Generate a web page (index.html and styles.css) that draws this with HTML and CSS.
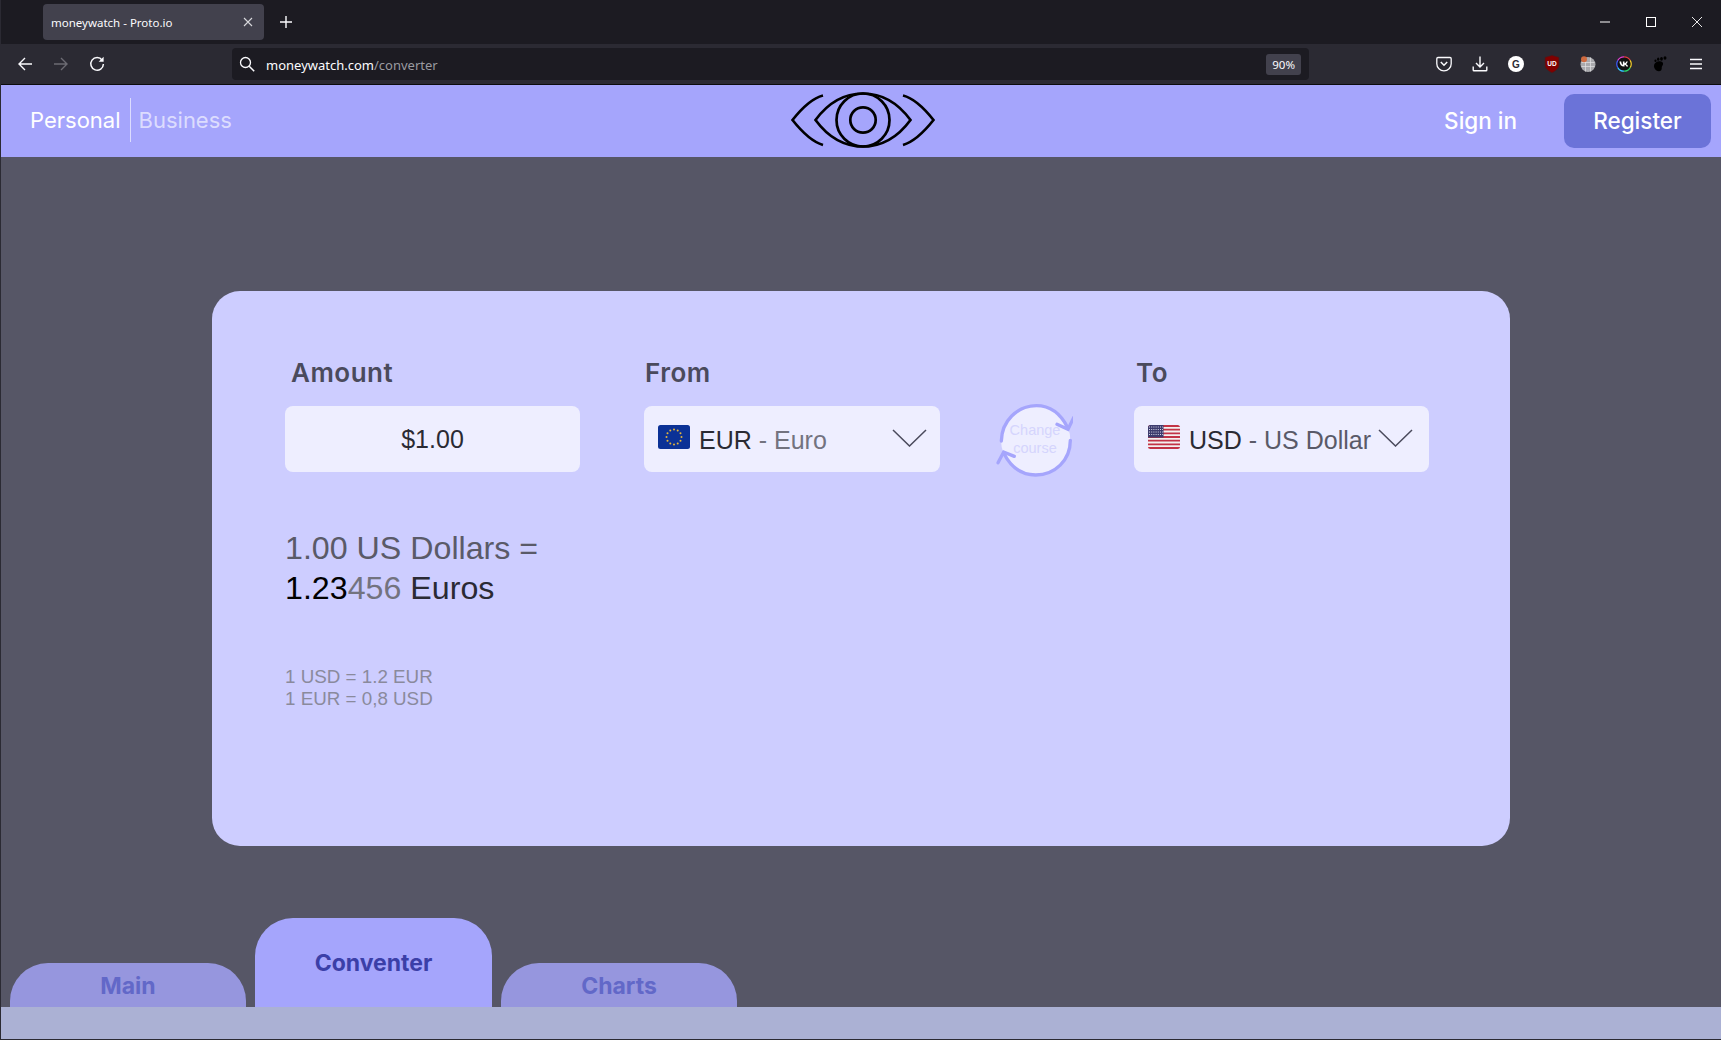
FILE: index.html
```html
<!DOCTYPE html>
<html lang="en">
<head>
    <meta charset="UTF-8">
    <title>moneywatch - Proto.io</title>
    <link rel="stylesheet" href="styles.css">
</head>
<body>
<div class="window">
    <div class="tabstrip">
        <div class="tab">
            <span class="tab-title">moneywatch - Proto.io</span>
            <svg class="tab-close" width="10" height="10" viewBox="0 0 10 10"><path d="M1 1l8 8M9 1l-8 8" stroke="#d8d8dc" stroke-width="1.1"/></svg>
        </div>
        <svg class="tab-new" width="12" height="12" viewBox="0 0 12 12"><path d="M6 0v12M0 6h12" stroke="#fbfbfe" stroke-width="1.4"/></svg>
        <div class="win-buttons">
            <svg width="12" height="12" viewBox="0 0 12 12"><path d="M1 6h10" stroke="#fff" stroke-width="1"/></svg>
            <svg width="12" height="12" viewBox="0 0 12 12"><rect x="1.5" y="1.5" width="9" height="9" fill="none" stroke="#fff" stroke-width="1"/></svg>
            <svg width="12" height="12" viewBox="0 0 12 12"><path d="M1 1l10 10M11 1L1 11" stroke="#fff" stroke-width="0.9"/></svg>
        </div>
    </div>

    <div class="toolbar">
        <div class="nav-buttons">
            <svg width="16" height="16" viewBox="0 0 16 16"><path d="M15 8H2M8 2L2 8l6 6" fill="none" stroke="#fbfbfe" stroke-width="1.4"/></svg>
            <svg width="16" height="16" viewBox="0 0 16 16"><path d="M1 8h13M8 2l6 6-6 6" fill="none" stroke="#6c6b73" stroke-width="1.4"/></svg>
            <svg width="16" height="16" viewBox="0 0 16 16"><path d="M13.2 4.2A6.3 6.3 0 1 0 14.4 8" fill="none" stroke="#fbfbfe" stroke-width="1.5"/><path d="M14.6 0.8v5h-5z" fill="#fbfbfe"/></svg>
        </div>
        <div class="urlbar">
            <svg width="16" height="16" viewBox="0 0 16 16"><circle cx="6.5" cy="6.5" r="5" fill="none" stroke="#fbfbfe" stroke-width="1.3"/><path d="M10.2 10.2l5 5" stroke="#fbfbfe" stroke-width="1.5"/></svg>
            <span class="url-text">moneywatch.com<span class="url-path">/converter</span></span>
            <span class="url-zoom">90%</span>
        </div>
        <div class="addons">
            <svg width="16" height="16" viewBox="0 0 16 16"><path d="M2 1.5h12a1.2 1.2 0 0 1 1.2 1.2v5a7.2 7.2 0 0 1-14.4 0v-5A1.2 1.2 0 0 1 2 1.5z" fill="none" stroke="#fbfbfe" stroke-width="1.3"/><path d="M4.8 6L8 9.2 11.200 6" fill="none" stroke="#fbfbfe" stroke-width="1.5"/></svg>
            <svg width="16" height="16" viewBox="0 0 16 16"><path d="M8 0.500v10M4 7l4 4 4-4M1.200 10.500v3.500a.8.8 0 0 0 .8.8h12a.8.8 0 0 0 .8-.8v-3.500" fill="none" stroke="#fbfbfe" stroke-width="1.400"/></svg>
            <svg width="16" height="16" viewBox="0 0 16 16"><circle cx="8" cy="8" r="8" fill="#fff"/><text x="8" y="11.500" text-anchor="middle" class="addon-g">G</text></svg>
            <svg width="16" height="18" viewBox="0 0 16 18"><path d="M8 0.500l6.800 2v7.500c0 3.500-3.500 6-6.800 7.500-3.300-1.500-6.800-4-6.800-7.500V2.500z" fill="#800000" stroke="#5c1010" stroke-width="0.600"/><text x="8" y="10.500" text-anchor="middle" class="addon-ub">UD</text></svg>
            <svg width="16" height="16" viewBox="0 0 16 16"><circle cx="8" cy="8.500" r="7.500" fill="#a9a9ad"/><path d="M1.500 6.500h13M1.500 10.500h13M5.500 1.500v14M10.500 1.500v14" stroke="#e2e2e4" stroke-width="0.700"/><circle cx="4" cy="3.200" r="3" fill="#cf6a3f"/></svg>
            <svg width="16" height="16" viewBox="0 0 16 16"><circle cx="8" cy="8" r="7.200" fill="#111"/><path d="M8 .8a7.200 7.200 0 0 1 6.200 3.600" fill="none" stroke="#e23c3c" stroke-width="1.200"/><path d="M14.200 4.400a7.200 7.200 0 0 1 0 7.200" fill="none" stroke="#f7d02c" stroke-width="1.200"/><path d="M14.200 11.600A7.200 7.200 0 0 1 8 15.200" fill="none" stroke="#2bd36b" stroke-width="1.200"/><path d="M8 15.200a7.200 7.200 0 0 1-6.200-3.600" fill="none" stroke="#33c2ff" stroke-width="1.200"/><path d="M1.800 11.600a7.200 7.200 0 0 1 0-7.200" fill="none" stroke="#3d5cff" stroke-width="1.200"/><path d="M1.800 4.400A7.200 7.200 0 0 1 8 .8" fill="none" stroke="#e23ccf" stroke-width="1.200"/><path d="M3.500 5.500h1.700c.1 2 .9 3 1.700 3.200V5.500h1.600v1.800c.8-.1 1.500-.9 1.800-1.800h1.500c-.3 1.200-1.100 2.100-1.800 2.600.8.400 1.700 1.300 2.100 2.400h-1.700c-.3-.9-1-1.600-1.900-1.700v1.700h-.3c-3 0-4.600-2-4.700-5z" fill="#fff"/></svg>
            <svg width="14" height="16" viewBox="0 0 14 16"><path d="M6.200 5.200c2.200-.3 3.900.7 3.900 2.600 0 1.500-1.100 2-1.300 3.200-.2 1.300.3 1.800-.6 3.200-1 1.400-3.200 1.500-4.800.3C1.400 13 .5 10.500 1.200 8.400 2 6.500 4 5.500 6.200 5.200z" fill="#000"/><ellipse cx="2.500" cy="4.800" rx="1.100" ry="1.300" fill="#000"/><ellipse cx="5.200" cy="3.200" rx="1.200" ry="1.600" fill="#000"/><ellipse cx="8.500" cy="2.800" rx="1.400" ry="1.900" fill="#000"/><ellipse cx="12" cy="2" rx="1.500" ry="1.800" fill="#000"/></svg>
            <svg width="14" height="12" viewBox="0 0 14 12"><path d="M1 1.500h12M1 6h12M1 10.500h12" stroke="#fbfbfe" stroke-width="1.400"/></svg>
        </div>
    </div>

    <header class="site-header">
        <div class="account-switch">
            <a class="account-link active">Personal</a>
            <a class="account-link">Business</a>
        </div>
        <svg class="logo" width="144" height="56" viewBox="0 0 144 56" fill="none" stroke="#000" stroke-width="2.700">
            <path d="M32 3.500C22 6 11 16 1.500 28 11 40 22 50 32 53M112 3.500C122 6 133 16 142.500 28 133 40 122 50 112 53"/>
            <path d="M24.500 28C37 11 52 1.500 72 1.500S107 11 119.500 28C107 45 92 54.500 72 54.500S37 45 24.500 28z"/>
            <circle cx="72" cy="28" r="26.500"/>
            <circle cx="72" cy="28" r="12.700"/>
        </svg>
        <div class="header-actions">
            <a class="sign-in">Sign in</a>
            <a class="register">Register</a>
        </div>
    </header>

    <main class="page">
        <section class="card">
            <div class="converter">
                <div class="field field-amount">
                    <label class="field-label">Amount</label>
                    <div class="control control-center">$1.00</div>
                </div>
                <div class="field field-from">
                    <label class="field-label">From</label>
                    <div class="control">
                        <svg class="flag" width="32" height="24" viewBox="0 0 32 24">
                            <rect width="32" height="24" rx="2.500" fill="#0b3196"/>
                            <g fill="#e6b53a">
                                <circle cx="16" cy="4.500" r="1"/><circle cx="19.700" cy="5.500" r="1"/><circle cx="22.500" cy="8.300" r="1"/><circle cx="23.500" cy="12" r="1"/><circle cx="22.500" cy="15.700" r="1"/><circle cx="19.700" cy="18.500" r="1"/><circle cx="16" cy="19.500" r="1"/><circle cx="12.300" cy="18.500" r="1"/><circle cx="9.500" cy="15.700" r="1"/><circle cx="8.500" cy="12" r="1"/><circle cx="9.500" cy="8.300" r="1"/><circle cx="12.300" cy="5.500" r="1"/>
                            </g>
                        </svg>
                        <span class="currency"><span class="code">EUR</span> - Euro</span>
                        <svg class="chevron" width="35" height="18" viewBox="0 0 35 18"><path d="M1 1l16.500 16L34 1" fill="none" stroke="#4a4a5c" stroke-width="1.500"/></svg>
                    </div>
                </div>
                <div class="swap">
                    <svg width="80" height="77" viewBox="40 30 240 231" fill="none" stroke="#a5a5fc" stroke-width="10" stroke-linecap="round">
                        <circle cx="168" cy="148" r="104" fill="#eeeeff" stroke="none"/>
                        <path d="M65 150C66 90 112 45 170 44c40 0 72 22 94 66"/>
                        <path d="M232 100l33 15 17-35"/>
                        <path d="M272 148c0 60-46 104-104 104-40 0-72-20-94-62"/>
                        <path d="M104 196l-32-13-17 32"/>
                    </svg>
                    <span class="swap-label">Change course</span>
                </div>
                <div class="field field-to">
                    <label class="field-label">To</label>
                    <div class="control">
                        <svg class="flag" width="32" height="24" viewBox="0 0 32 24">
                            <defs><clipPath id="flagclip"><rect width="32" height="24" rx="2.500"/></clipPath></defs>
                            <g clip-path="url(#flagclip)">
                                <rect width="32" height="24" fill="#f3f0f0"/>
                                <path d="M0 1h32M0 4.700h32M0 8.400h32M0 12h32M0 15.700h32M0 19.400h32M0 23h32" stroke="#c23346" stroke-width="1.800"/>
                                <rect width="15.500" height="12.500" fill="#3c3b6e"/>
                                <path d="M1 2h14M1 4.500h14M1 7h14M1 9.500h14" stroke="#d5d5e6" stroke-width="1" stroke-dasharray="1 1.200"/>
                            </g>
                        </svg>
                        <span class="currency"><span class="code">USD</span> - US Dollar</span>
                        <svg class="chevron chevron-to" width="35" height="18" viewBox="0 0 35 18"><path d="M1 1l16.500 16L34 1" fill="none" stroke="#4a4a5c" stroke-width="1.500"/></svg>
                    </div>
                </div>
            </div>

            <div class="result">
                <div class="result-from">1.00 US Dollars =</div>
                <div class="result-to"><span class="digits-main">1.23</span><span class="digits-rest">456</span> Euros</div>
            </div>

            <div class="rates">
                <div>1 USD = 1.2 EUR</div>
                <div>1 EUR = 0,8 USD</div>
            </div>
        </section>

        <nav class="tabs">
            <a class="page-tab">Main</a>
            <a class="page-tab current">Conventer</a>
            <a class="page-tab">Charts</a>
        </nav>
    </main>

    <footer class="site-footer"></footer>
</div>
</body>
</html>
```

FILE: styles.css
```css
* {
    box-sizing: border-box;
}

html, body {
    margin: 0;
    height: 100%;
    background-color: #1c1b22;
}

.window {
    display: flex;
    flex-direction: column;
    height: 1040px;
    border-left: 1px solid #2b2a33;
    border-bottom: 1px solid #2b2a33;
    font-family: "Liberation Sans", Arial, sans-serif;
}

/* browser chrome */
.tabstrip {
    display: flex;
    align-items: center;
    height: 44px;
    padding: 4px 0 4px 42px;
    background-color: #1c1b22;
}

.tab {
    display: flex;
    align-items: center;
    justify-content: space-between;
    width: 221px;
    height: 36px;
    padding: 0 11px 0 8px;
    border-radius: 4px;
    background-color: #42414d;
}

.tab-title {
    color: #fbfbfe;
    font: 11.500px "Noto Sans", sans-serif;
}

.tab-new {
    margin-left: 16px;
}

.win-buttons {
    display: flex;
    gap: 34px;
    margin-left: auto;
    padding-right: 18px;
}

.toolbar {
    display: flex;
    align-items: center;
    height: 41px;
    background-color: #2b2a33;
    border-bottom: 1px solid #0c0c0d;
}

.nav-buttons {
    display: flex;
    align-items: center;
    gap: 20px;
    width: 231px;
    padding-left: 16px;
}

.urlbar {
    display: flex;
    align-items: center;
    width: 1077px;
    height: 32px;
    padding: 0 8px 0 7px;
    border-radius: 4px;
    background-color: #1c1b22;
}

.url-text {
    margin-left: 11px;
    padding-top: 1px;
    color: #fbfbfe;
    font: 13px "Noto Sans", sans-serif;
}

.url-path {
    color: #9a9aa0;
}

.url-zoom {
    margin-left: auto;
    padding: 3px 6px;
    border-radius: 3px;
    background-color: #42414d;
    color: #fbfbfe;
    font: 11.500px "Noto Sans", sans-serif;
}

.addons {
    display: grid;
    grid-template-columns: repeat(8, 36px);
    align-items: center;
    justify-items: center;
    margin-left: 117px;
}

/* small letters on the addon badges */
.addon-g {
    fill: #2b2a33;
    font: bold 10px "Liberation Sans", sans-serif;
}

.addon-ub {
    fill: #fff;
    font: bold 6.500px "Liberation Sans", sans-serif;
}

/* site header */
.site-header {
    display: flex;
    align-items: center;
    justify-content: space-between;
    height: 72px;
    padding: 0 10px 0 29px;
    background-color: #a5a5fc;
    font-family: Inter, sans-serif;
}

.account-switch {
    display: flex;
    width: 252px;
    align-items: center;
    margin-top: -2px;
    font-size: 22px;
}

.account-link {
    padding: 9px 0;
    color: #dcdcfe;
}

.account-link.active {
    margin-right: 8px;
    padding-right: 9px;
    border-right: 1px solid #dcdcfe;
    color: #ffffff;
}

.logo {
    margin-top: -2px;
}

.header-actions {
    display: flex;
    align-items: center;
    gap: 47px;
}

.sign-in {
    margin-top: -2px;
    color: #ffffff;
    font-size: 22.500px;
    font-weight: 500;
}

.register {
    display: block;
    width: 147px;
    height: 54px;
    border-radius: 10px;
    background-color: #6b73d8;
    color: #ffffff;
    font-size: 22.500px;
    font-weight: 500;
    line-height: 54px;
    text-align: center;
}

/* page body */
.page {
    display: flex;
    flex: 1;
    flex-direction: column;
    min-height: 0;
    background-color: #565666;
}

.card {
    width: 1298px;
    height: 555px;
    margin: 134px 0 0 211px;
    padding: 65px 73px 0;
    border-radius: 28px;
    background-color: #cdcdff;
}

.converter {
    display: flex;
    align-items: flex-end;
}

.field {
    display: flex;
    flex-direction: column;
    width: 295px;
}

.field-from {
    width: 296px;
    margin-left: 64px;
}

.field-label {
    margin-bottom: 16px;
    color: #4a4a5c;
    font: 600 26px/34px Inter, sans-serif;
    letter-spacing: 0.5px;
}

.field-amount .field-label {
    padding-left: 6px;
}

.field-from .field-label {
    padding-left: 1px;
}

.field-to .field-label {
    padding-left: 2px;
}

.control {
    display: flex;
    align-items: center;
    height: 66px;
    padding: 0 14px;
    border-radius: 8px;
    background-color: #eeeeff;
}

.control-center {
    justify-content: center;
    color: #2a2a33;
    font-size: 25px;
}

.flag {
    flex: none;
    margin-top: -4px;
}

.currency {
    margin-left: 9px;
    padding-top: 2px;
    color: #73737f;
    font-size: 25px;
    white-space: nowrap;
}

.field-to .currency {
    color: #5a5a68;
}

.code {
    color: #2a2a33;
}

.chevron {
    flex: none;
    margin-left: auto;
    margin-top: -2px;
    margin-right: -1px;
}

.chevron-to {
    margin-right: 2px;
}

.swap {
    position: relative;
    flex: none;
    width: 80px;
    height: 77px;
    margin: 0 61px -6px 53px;
}

.swap-label {
    position: absolute;
    top: 20px;
    left: 14px;
    width: 56px;
    color: #d5d5fd;
    font-size: 14.500px;
    line-height: 18px;
    text-align: center;
}

.result {
    margin-top: 57px;
    color: #5a5a68;
    font-size: 32.200px;
    line-height: 39.500px;
}

.result-to {
    color: #2a2a33;
}

.digits-main {
    color: #000000;
}

.digits-rest {
    color: #73737f;
}

.rates {
    margin-top: 58px;
    color: #8a8a9c;
    font-size: 18.800px;
    line-height: 22px;
}

/* bottom tabs */
.tabs {
    display: flex;
    align-items: flex-end;
    gap: 9px;
    margin-top: auto;
    padding-left: 9px;
}

.page-tab {
    width: 236px;
    height: 44px;
    border-radius: 38px 38px 0 0;
    background-color: #9696de;
    color: #6268c8;
    font: 700 23px/46px Inter, sans-serif;
    text-align: center;
}

.page-tab.current {
    width: 237px;
    height: 89px;
    background-color: #a5a5fc;
    color: #3b3fa8;
    line-height: 91px;
}

.site-footer {
    flex: none;
    height: 32px;
    background-color: #abb1d4;
}
```
